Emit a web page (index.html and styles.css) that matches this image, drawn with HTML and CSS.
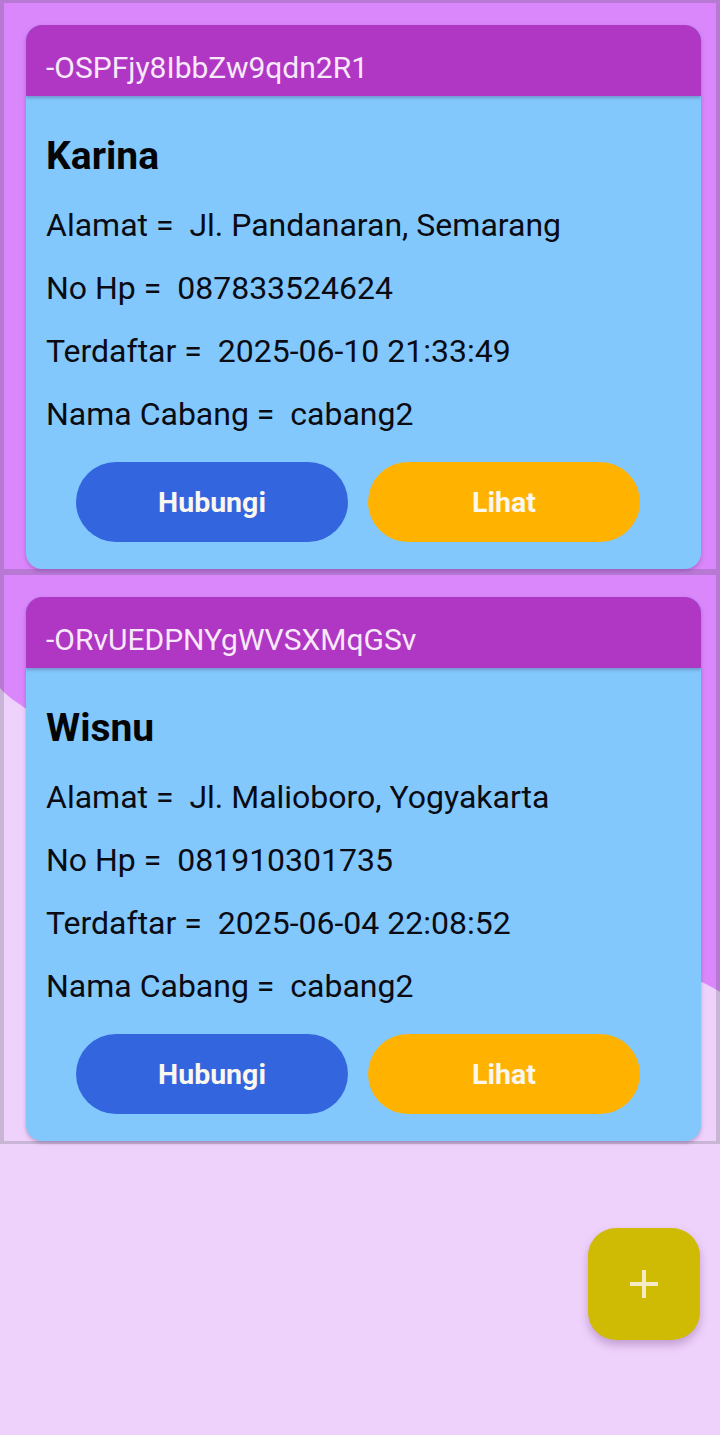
FILE: index.html
```html
<!DOCTYPE html>
<html lang="id">
<head>
<meta charset="utf-8">
<title>Daftar Pelanggan</title>
<link rel="stylesheet" href="styles.css">
</head>
<body>
<main class="list">
  <section class="item">
    <article class="card">
      <header class="card-head">-OSPFjy8IbbZw9qdn2R1</header>
      <div class="card-body">
        <h2 class="name">Karina</h2>
        <p class="row">Alamat =  Jl. Pandanaran, Semarang</p>
        <p class="row">No Hp =  087833524624</p>
        <p class="row">Terdaftar =  2025-06-10 21:33:49</p>
        <p class="row">Nama Cabang =  cabang2</p>
        <div class="actions">
          <button class="btn btn-blue">Hubungi</button>
          <button class="btn btn-orange">Lihat</button>
        </div>
      </div>
    </article>
  </section>
  <section class="item">
    <article class="card">
      <header class="card-head">-ORvUEDPNYgWVSXMqGSv</header>
      <div class="card-body">
        <h2 class="name">Wisnu</h2>
        <p class="row">Alamat =  Jl. Malioboro, Yogyakarta</p>
        <p class="row">No Hp =  081910301735</p>
        <p class="row">Terdaftar =  2025-06-04 22:08:52</p>
        <p class="row">Nama Cabang =  cabang2</p>
        <div class="actions">
          <button class="btn btn-blue">Hubungi</button>
          <button class="btn btn-orange">Lihat</button>
        </div>
      </div>
    </article>
  </section>
</main>
<button class="fab" aria-label="Tambah">
  <svg width="32" height="32" viewBox="0 0 32 32"><path d="M16 2V30M2 16H30" stroke="#f4ebc4" stroke-width="4" fill="none"/></svg>
</button>
</body>
</html>
```

FILE: styles.css
```css
html, body {
  margin: 0;
  padding: 0;
}
body {
  width: 720px;
  min-height: 1435px;
  background-color: #efd2fc;
  background-image: url("data:image/svg+xml,%3Csvg xmlns='http://www.w3.org/2000/svg' width='720' height='1000'%3E%3Cpath d='M0 0H720V992C660 950 60 760 0 688Z' fill='%23da87fb'/%3E%3C/svg%3E");
  background-repeat: no-repeat;
  background-position: 0 0;
  font-family: Roboto, "Noto Sans", sans-serif;
  position: relative;
}
.list {
  display: flex;
  flex-direction: column;
}
.item {
  border: 4px solid rgba(48, 66, 66, 0.2);
  border-top-width: 3px;
  border-bottom-width: 3px;
  padding: 22px 15px 0 22px;
}
.card {
  border-radius: 16px;
  overflow: hidden;
  background: #82c8fc;
  box-shadow: 0 2px 4px rgba(60, 0, 80, 0.25);
}
.card-head {
  box-sizing: border-box;
  height: 71px;
  background: #b036c4;
  color: #f7e9fa;
  font-size: 30px;
  line-height: 55px;
  padding-top: 15px;
  padding-left: 20px;
  box-shadow: 0 2px 3px rgba(60, 0, 80, 0.25);
  position: relative;
}
.card-body {
  padding: 38px 20px 27px 20px;
}
.name {
  margin: 0 0 16px 0;
  font-size: 39px;
  font-weight: 700;
  line-height: 44px;
  color: #050508;
}
.row {
  margin: 0;
  font-size: 32px;
  line-height: 63px;
  color: #0b0b14;
  white-space: pre;
}
.actions {
  display: flex;
  justify-content: flex-start;
  gap: 20px;
  margin-top: 16px;
  padding-left: 30px;
}
.btn {
  width: 272px;
  height: 80px;
  border: none;
  border-radius: 40px;
  color: #fbf6ee;
  font-family: Roboto, "Noto Sans", sans-serif;
  font-size: 28.5px;
  font-weight: 700;
  padding: 0;
}
.btn-blue { background: #3366de; }
.btn-orange { background: #ffb300; }
.fab {
  position: absolute;
  left: 588px;
  top: 1228px;
  width: 112px;
  height: 112px;
  border: none;
  border-radius: 28px;
  background: #cfbb03;
  box-shadow: 0 5px 10px rgba(90, 40, 110, 0.3);
  display: flex;
  align-items: center;
  justify-content: center;
  padding: 0;
}
```
